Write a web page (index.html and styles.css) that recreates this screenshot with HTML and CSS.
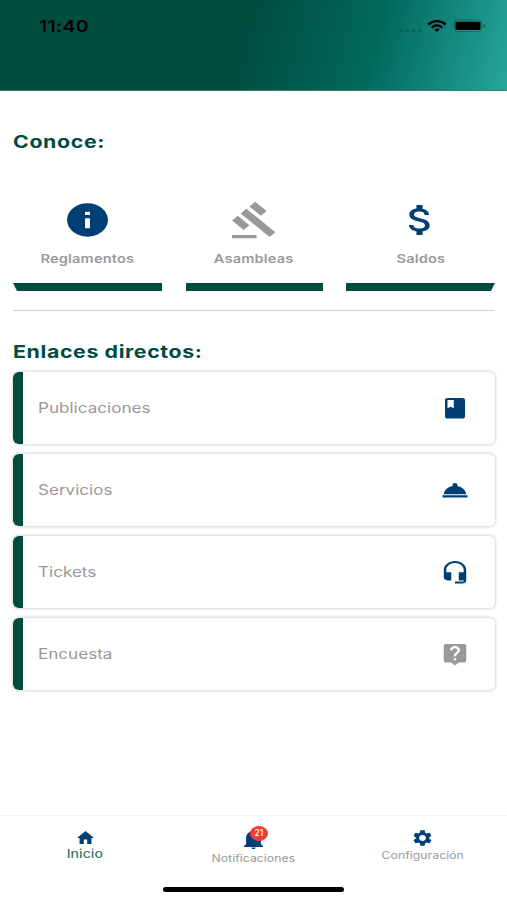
FILE: index.html
```
<!DOCTYPE html>
<html lang="es">
  <head>
    <meta charset="UTF-8" />
    <meta name="viewport" content="width=device-width, initial-scale=1.0" />
    <title>Inicio</title>
    <link rel="stylesheet" href="styles.css">
  </head>
  <body>
    <header class="header">
      <span class="time wide">11:40</span>
      <div class="status">
        <div class="dots"><i></i><i></i><i></i><i></i></div>
        <svg class="wifi" viewBox="0 0 20 13" preserveAspectRatio="none">
          <path d="M1.2 4.9 Q10 -2.6 18.8 4.9" fill="none" stroke="#000" stroke-width="2.6"/>
          <path d="M4.6 8.2 Q10 3.6 15.4 8.2" fill="none" stroke="#000" stroke-width="2.4"/>
          <path d="M7.2 10.2 Q10 8 12.8 10.2 L10 13z"/>
        </svg>
        <svg class="battery" viewBox="0 0 34 14">
          <rect x="1" y="1" width="28" height="11.5" rx="3.5" fill="none" stroke="#0a4a42" stroke-opacity=".45"/>
          <rect x="2.5" y="2.8" width="25" height="8.2" rx="1.5"/>
          <path d="M30.5 5v4q2-.6 2-2t-2-2z" fill="#0a4a42" fill-opacity=".7"/>
        </svg>
      </div>
    </header>

    <main class="content">
      <h2><span class="wide">Conoce:</span></h2>
      <div class="cards">
        <a class="card first">
          <svg class="icon blue" viewBox="0 0 24 24" preserveAspectRatio="none"><path d="M12 2C6.48 2 2 6.48 2 12s4.48 10 10 10 10-4.48 10-10S17.52 2 12 2zm1.2 15h-2.400v-6h2.400v6zm0-8h-2.400V7h2.400v2z"/></svg>
          <span class="wide">Reglamentos</span>
        </a>
        <a class="card">
          <svg class="icon gray" viewBox="0 0 24 24" preserveAspectRatio="none"><path d="M1 21h12v2H1v-2zM5.245 8.07l2.83-2.827 14.14 14.142-2.828 2.828L5.245 8.07zM12.317 1l5.657 5.656-2.83 2.83-5.654-5.66L12.317 1zM3.825 9.485l5.657 5.657-2.828 2.828-5.657-5.657 2.828-2.828z"/></svg>
          <span class="wide">Asambleas</span>
        </a>
        <a class="card last">
          <svg class="icon blue" viewBox="0 0 24 24" preserveAspectRatio="none"><path d="M11.8 10.9c-2.27-.59-3-1.2-3-2.15 0-1.09 1.01-1.85 2.7-1.85 1.78 0 2.44.85 2.5 2.1h2.21c-.07-1.72-1.12-3.3-3.21-3.81V3h-3v2.16c-1.94.42-3.5 1.68-3.5 3.61 0 2.31 1.91 3.46 4.7 4.13 2.5.6 3 1.48 3 2.41 0 .69-.49 1.79-2.7 1.79-2.06 0-2.87-.92-2.98-2.1h-2.2c.12 2.19 1.76 3.42 3.68 3.83V21h3v-2.15c1.95-.37 3.5-1.5 3.5-3.55 0-2.84-2.43-3.81-4.7-4.4z"/></svg>
          <span class="wide">Saldos</span>
        </a>
      </div>
      <hr />

      <h2><span class="wide">Enlaces directos:</span></h2>
      <div class="links">
        <a class="link">
          <span class="wide">Publicaciones</span>
          <svg class="icon blue" viewBox="0 0 24 24" preserveAspectRatio="none"><path d="M18 2H6c-1.1 0-2 .9-2 2v16c0 1.1.9 2 2 2h12c1.1 0 2-.9 2-2V4c0-1.1-.9-2-2-2zM6 4h5v8l-2.5-1.5L6 12V4z"/></svg>
        </a>
        <a class="link">
          <span class="wide">Servicios</span>
          <svg class="icon blue" viewBox="0 0 24 24" preserveAspectRatio="none"><path d="M2 17h20v2H2zm11.84-9.21c.1-.24.16-.51.16-.79 0-1.1-.9-2-2-2s-2 .9-2 2c0 .28.06.55.16.79C6.25 8.6 3.27 11.93 3 16h18c-.27-4.07-3.25-7.4-7.16-8.21z"/></svg>
        </a>
        <a class="link">
          <span class="wide">Tickets</span>
          <svg class="icon blue" viewBox="0 0 24 24" preserveAspectRatio="none"><path d="M12 1c-4.97 0-9 4.03-9 9v7c0 1.66 1.34 3 3 3h3v-8H5v-2c0-3.87 3.13-7 7-7s7 3.13 7 7v2h-4v8h4v1h-7v2h6c1.66 0 3-1.34 3-3V10c0-4.97-4.03-9-9-9z"/></svg>
        </a>
        <a class="link">
          <span class="wide">Encuesta</span>
          <svg class="icon gray" viewBox="0 0 24 24" preserveAspectRatio="none"><path d="M19 2H5c-1.11 0-2 .9-2 2v14c0 1.1.89 2 2 2h4l3 3 3-3h4c1.1 0 2-.9 2-2V4c0-1.1-.9-2-2-2zm-6 16h-2v-2h2v2zm2.07-7.75l-.9.92C13.45 11.9 13 12.5 13 14h-2v-.5c0-1.1.45-2.1 1.17-2.83l1.24-1.26c.37-.36.59-.86.59-1.41 0-1.1-.9-2-2-2s-2 .9-2 2H8c0-2.21 1.79-4 4-4s4 1.79 4 4c0 .88-.36 1.68-.93 2.25z"/></svg>
        </a>
      </div>
    </main>

    <nav class="tabs">
      <a class="tab active">
        <svg class="icon blue home" viewBox="2 3 20 17" preserveAspectRatio="none"><path d="M10 20v-6h4v6h5v-8h3L12 3 2 12h3v8z"/></svg>
        <span class="wide">Inicio</span>
      </a>
      <a class="tab notifications">
        <div class="bell-wrap">
          <svg class="icon blue bell" viewBox="3 2 18 20" preserveAspectRatio="none"><path d="M21 19v1H3v-1l2-2v-6c0-3.1 2.03-5.83 5-6.71V4a2 2 0 0 1 4 0v.29c2.97.88 5 3.61 5 6.71v6l2 2zm-7 1.6a2 1.6 0 0 1-4 0z"/></svg>
          <b class="badge">21</b>
        </div>
        <span class="wide">Notificaciones</span>
      </a>
      <a class="tab settings">
        <svg class="icon blue gear" viewBox="2 2 20 20" preserveAspectRatio="none"><path d="M19.14 12.94c.04-.3.06-.61.06-.94 0-.32-.02-.64-.07-.94l2.03-1.58c.18-.14.23-.41.12-.61l-1.92-3.32c-.12-.22-.37-.29-.59-.22l-2.39.96c-.5-.38-1.03-.7-1.62-.94L14.4 2.81c-.04-.24-.24-.41-.48-.41h-3.84c-.24 0-.43.17-.47.41L9.25 5.35C8.66 5.59 8.12 5.92 7.63 6.29L5.24 5.33c-.22-.08-.47 0-.59.22L2.74 8.87c-.12.21-.08.47.12.61l2.03 1.58c-.05.3-.09.63-.09.94s.02.64.07.94l-2.03 1.58c-.18.14-.23.41-.12.61l1.92 3.32c.12.22.37.29.59.22l2.39-.96c.5.38 1.03.7 1.62.94l.36 2.54c.05.24.24.41.48.41h3.84c.24 0 .44-.17.47-.41l.36-2.54c.59-.24 1.13-.56 1.62-.94l2.39.96c.22.08.47 0 .59-.22l1.92-3.32c.12-.22.07-.47-.12-.61l-2.01-1.58zM12 15.6c-1.98 0-3.6-1.62-3.6-3.6s1.62-3.6 3.6-3.6 3.6 1.62 3.6 3.6-1.62 3.6-3.6 3.6z"/></svg>
        <span class="wide">Configuración</span>
      </a>
    </nav>
    <div class="home-bar"></div>
  </body>
</html>
```
FILE: styles.css
```
* {
  box-sizing: border-box;
}
body {
  margin: 0;
  height: 900px;
  display: flex;
  flex-direction: column;
  overflow: hidden;
  background: #fff;
  font-family: Inter, sans-serif;
  color: #999;
}
.wide {
  display: inline-block;
  transform: scaleX(1.22);
  transform-origin: left center;
  white-space: nowrap;
}
.icon {
  display: block;
  flex: none;
}
.blue {
  fill: #003f74;
}
.gray {
  fill: #999;
}

.header {
  height: 91px;
  flex: none;
  display: flex;
  justify-content: space-between;
  align-items: flex-start;
  padding: 16px 20px 0 39px;
  background: linear-gradient(105deg, #004d40 48%, #00695c 73%, #26a69a 100%);
  border-bottom: 1px solid #367e72;
}
.time {
  color: #000;
  font-size: 16px;
  font-weight: 600;
  line-height: 20px;
  letter-spacing: 0.2px;
}
.status {
  display: flex;
  align-items: center;
  height: 20px;
}
.dots {
  display: flex;
  gap: 3px;
  margin: 8px 6px 0 0;
}
.dots i {
  width: 3px;
  height: 3px;
  border-radius: 50%;
  background: #065f54;
}
.wifi {
  width: 20px;
  height: 12px;
  margin-right: 6px;
}
.battery {
  width: 34px;
  height: 14px;
}

.content {
  flex: 1;
  padding: 39px 12px 0 13px;
}
h2 {
  margin: 0;
  font-size: 17.5px;
  line-height: 24px;
  font-weight: 700;
  letter-spacing: 0.5px;
  color: #004d40;
}
.cards {
  display: flex;
  justify-content: space-between;
  margin: 46px 0 19px;
}
.card {
  width: 137px;
  height: 91px;
  display: flex;
  flex-direction: column;
  align-items: center;
  font-size: 12px;
  font-weight: 600;
  line-height: 16px;
  letter-spacing: 0.1px;
}
.card .icon {
  width: 49px;
  height: 40px;
  margin-bottom: 11px;
}
.card .wide,
.tab .wide {
  transform-origin: center;
}
.card::after {
  content: "";
  width: 100%;
  height: 8px;
  margin-top: auto;
  background: #004d40;
}
.card.first,
.card.last {
  width: 149px;
}
/* slanted outer ends of the green bars */
.card.first::after {
  clip-path: polygon(0 0, 100% 0, 100% 100%, 4px 100%);
}
.card.last::after {
  clip-path: polygon(0 0, 100% 0, calc(100% - 4px) 100%, 0 100%);
}
hr {
  margin: 0 0 29px;
  border: 0;
  border-top: 1px solid #d2d2d2;
}

.links {
  display: flex;
  flex-direction: column;
  gap: 10px;
  margin-top: 8px;
}
.link {
  height: 72px;
  display: flex;
  justify-content: space-between;
  align-items: center;
  padding: 0 25px 0 15px;
  border-left: 10px solid #004d40;
  border-radius: 6px;
  box-shadow: 0 0 3px 1px rgba(0, 0, 0, 0.16);
  font-size: 14px;
}
.link .wide {
  margin-bottom: 2px;
}
.link .icon {
  width: 30px;
  height: 24.5px;
}

.tabs {
  height: 66px;
  flex: none;
  display: grid;
  grid-template-columns: 1fr 1fr 1fr;
  border-top: 1px solid #f1f1f1;
}
.tab {
  display: flex;
  flex-direction: column;
  align-items: center;
  font-size: 10px;
  line-height: 14px;
  letter-spacing: 0.05px;
  padding-top: 15px;
}
.active {
  color: #3c7c60;
  font-size: 11.5px;
  font-weight: 500;
  padding-left: 1px;
}
.home {
  width: 17px;
  height: 13px;
  margin-bottom: 3px;
}
.notifications {
  padding-top: 13px;
}
.bell-wrap {
  position: relative;
  margin-bottom: 2px;
}
.bell {
  width: 19px;
  height: 20px;
}
.badge {
  position: absolute;
  left: 6px;
  top: -3px;
  width: 18px;
  height: 15px;
  border-radius: 50%;
  background: #ee3d36;
  color: #fff;
  font-size: 8.5px;
  font-weight: 500;
  line-height: 15px;
  text-align: center;
}
.settings {
  padding-top: 14px;
}
.gear {
  width: 19px;
  height: 16px;
  margin-bottom: 2px;
}
.home-bar {
  width: 181px;
  height: 5px;
  margin: 6px auto 8px;
  flex: none;
  border-radius: 3px;
  background: #000;
}
```
